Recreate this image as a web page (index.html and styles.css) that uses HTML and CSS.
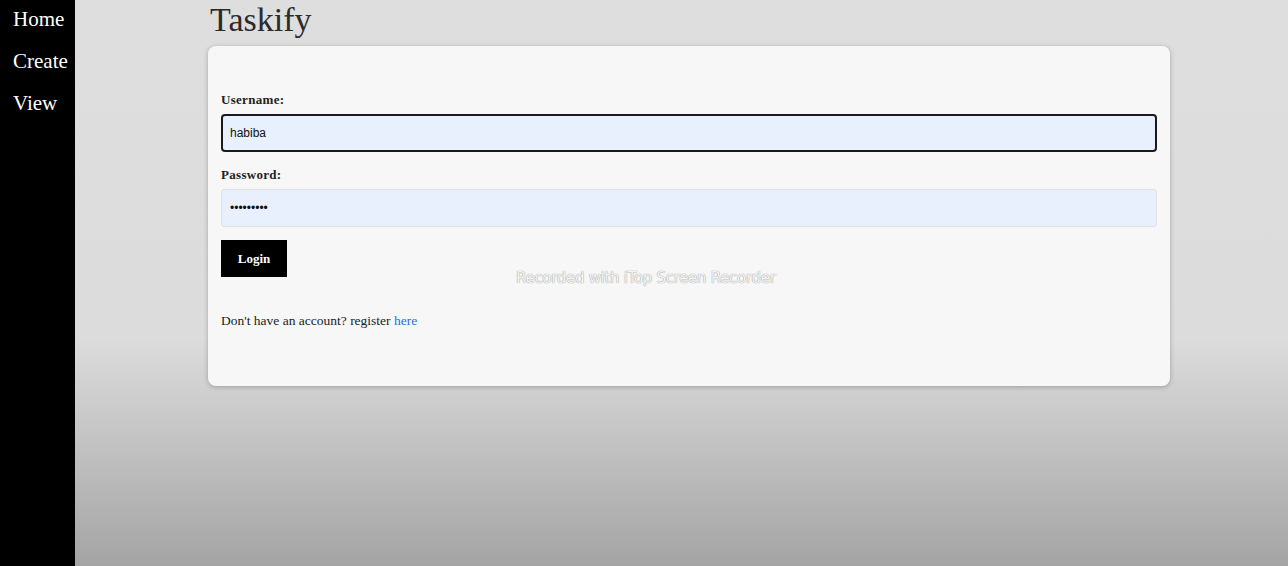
FILE: index.html
```html
<!DOCTYPE html>
<html>
<head>
<meta charset="utf-8">
<title>Taskify</title>
<link rel="stylesheet" href="styles.css">
</head>
<body>
<div class="page">
  <nav class="sidebar">
    <a class="nav-link" href="#">Home</a>
    <a class="nav-link" href="#">Create</a>
    <a class="nav-link" href="#">View</a>
  </nav>
  <main class="main">
    <h1 class="title">Taskify</h1>
    <form class="card">
      <label class="label" for="u">Username:</label>
      <input class="field focused" id="u" type="text" value="habiba">
      <label class="label" for="p">Password:</label>
      <input class="field" id="p" type="password" value="habiba123">
      <button class="btn" type="button">Login</button>
      <p class="note">Don't have an account? register <a class="link" href="#">here</a></p>
    </form>
  </main>
  <div class="watermark">Recorded with iTop Screen Recorder</div>
</div>
</body>
</html>
```
FILE: styles.css
```css
html, body {
  margin: 0;
  padding: 0;
  height: 100%;
}
body {
  font-family: "Liberation Serif", "Times New Roman", serif;
  background: linear-gradient(180deg, #dedede 0%, #dcdcdc 60%, #a4a4a4 100%);
  overflow: hidden;
}
.page {
  display: flex;
  height: 566px;
  position: relative;
}
.sidebar {
  width: 75px;
  flex: 0 0 75px;
  background: #000;
  display: flex;
  flex-direction: column;
  padding: 7px 0 0 13px;
  box-sizing: border-box;
  gap: 18px;
}
.nav-link {
  color: #fff;
  text-decoration: none;
  font-size: 21px;
  line-height: 24px;
}
.main {
  flex: 1;
  padding-left: 133px;
  padding-right: 118px;
}
.title {
  margin: 0;
  font-weight: normal;
  font-size: 34px;
  line-height: 40px;
  color: #2b2b2b;
  padding-left: 2px;
  height: 46px;
}
.card {
  background: #f7f7f7;
  border-radius: 8px;
  box-shadow: 0 1px 5px rgba(0, 0, 0, 0.25);
  height: 340px;
  box-sizing: border-box;
  padding: 46px 13px 0 13px;
  display: flex;
  flex-direction: column;
}
.label {
  font-weight: bold;
  font-size: 13px;
  line-height: 16px;
  color: #222;
  letter-spacing: 0.3px;
  margin-bottom: 6px;
}
.field {
  height: 38px;
  box-sizing: border-box;
  background: #e8f0fe;
  border: 1px solid #e0e0e0;
  border-radius: 3px;
  padding: 0 8px;
  font-family: "Liberation Sans", Arial, sans-serif;
  font-size: 12px;
  color: #111;
  margin-bottom: 16px;
  outline: none;
}
.field.focused {
  border: 2px solid #1a1a1a;
  border-radius: 4px;
  height: 38px;
  padding: 0 7px;
  margin-bottom: 15px;
}
.btn {
  align-self: flex-start;
  width: 66px;
  height: 37px;
  margin-top: -3px;
  background: #000;
  color: #fff;
  border: none;
  font-family: "Liberation Serif", "Times New Roman", serif;
  font-weight: bold;
  font-size: 13px;
  cursor: pointer;
}
.note {
  margin: 36px 0 0 0;
  font-size: 13.5px;
  color: #222;
}
.link {
  color: #1a73e8;
  text-decoration: none;
}
.watermark {
  position: absolute;
  left: 516px;
  top: 269px;
  font-family: "DejaVu Sans", sans-serif;
  font-size: 15px;
  letter-spacing: -0.3px;
  color: #f4f4f4;
  text-shadow: 0 0 1px #999, 0 0 1px #aaa;
}
```
